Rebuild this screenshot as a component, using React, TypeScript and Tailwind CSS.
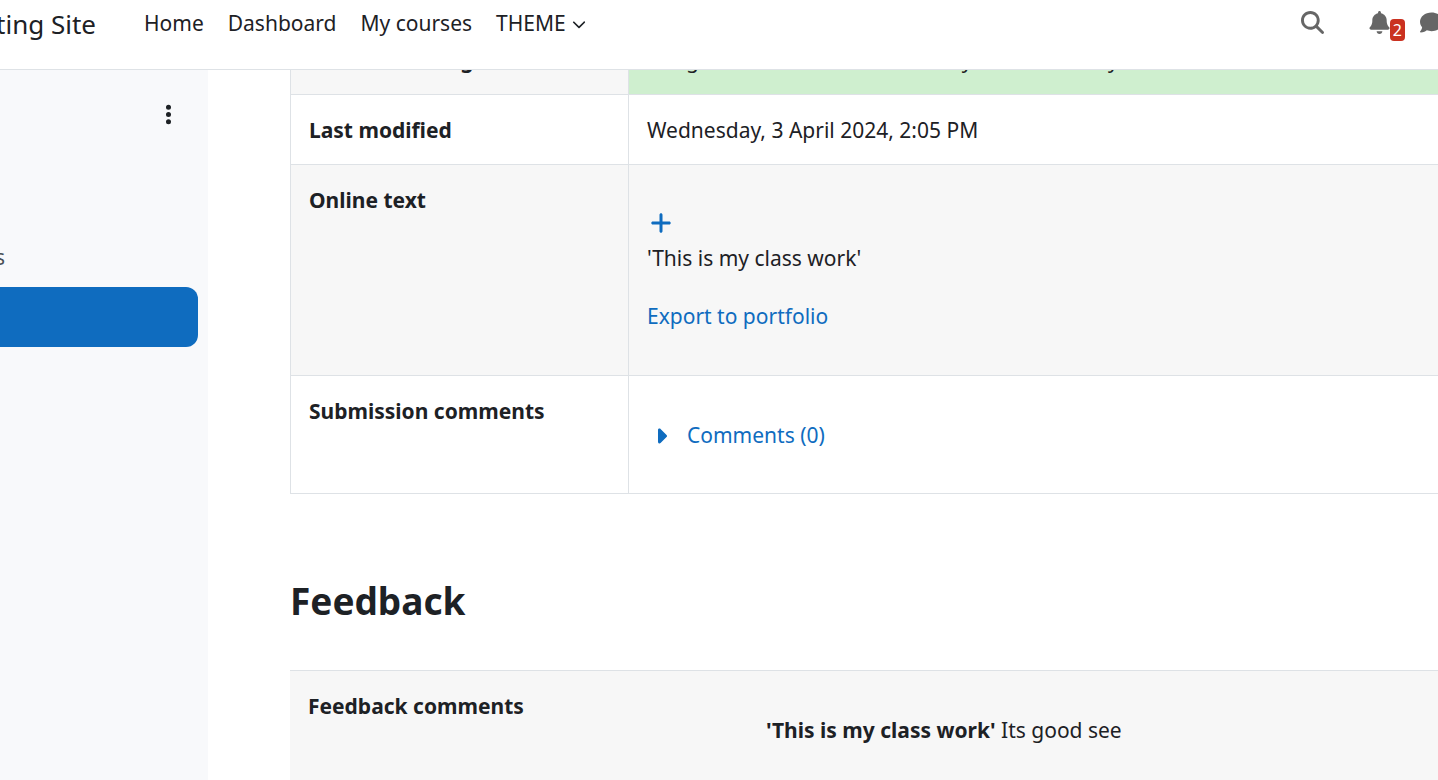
import type { ReactNode } from "react";
import {
  FaBell,
  FaCaretRight,
  FaChevronDown,
  FaComment,
  FaEllipsisVertical,
  FaMagnifyingGlass,
  FaPlus,
} from "react-icons/fa6";

function Header() {
  return (
    <header className="flex h-[70px] shrink-0 items-start overflow-hidden border-b border-[#dee2e6] bg-white">
      <a href="#" className="flex w-24 shrink-0 justify-end whitespace-nowrap pt-1 text-[26px] leading-[40px]">
        ting Site
      </a>
      <nav className="flex flex-1 gap-6 whitespace-nowrap pl-12 pt-[7px]">
        <a href="#">Home</a>
        <a href="#">Dashboard</a>
        <a href="#">My courses</a>
        <button type="button" className="flex items-center gap-1.5">
          THEME
          <FaChevronDown className="size-3.5" />
        </button>
      </nav>
      <div className="-mr-[5px] flex shrink-0 items-start pt-[11px] text-[#666]">
        <button type="button" aria-label="Search" className="mr-11">
          <FaMagnifyingGlass className="size-[23px]" />
        </button>
        <button type="button" aria-label="Notifications" className="flex items-start">
          <FaBell className="size-[23px]" />
          <span className="-ml-px mt-2 rounded bg-[#ca3120] px-[3px] text-base leading-[22px] text-white">2</span>
        </button>
        <button type="button" aria-label="Messages" className="ml-[15px]">
          <FaComment className="size-[23px]" />
        </button>
      </div>
    </header>
  );
}

function Sidebar() {
  return (
    <aside className="w-[208px] shrink-0 overflow-hidden bg-[#f8f9fb]">
      <div className="flex h-[88px] items-center justify-end pr-7">
        <button type="button" aria-label="Course index options">
          <FaEllipsisVertical className="size-[23px]" />
        </button>
      </div>
      <div className="pr-2.5 pt-[69px]">
        <a href="#" className="flex h-[60px] w-[5px] items-center justify-end text-[#495057]">
          s
        </a>
        <a href="#" aria-label="Current activity" className="block h-[60px] rounded-r-xl bg-[#0f6cbf]" />
      </div>
    </aside>
  );
}

type RowProps = { label: string; children: ReactNode; shaded?: boolean; highlight?: boolean };

function Row({ label, children, shaded = false, highlight = false }: RowProps) {
  return (
    <tr className={shaded ? "bg-[#f7f7f7]" : "bg-white"}>
      <th scope="row" className="w-[338px] border border-[#dee2e6] px-[18px] pb-[17px] pt-[19px] text-left align-top font-bold">
        {label}
      </th>
      <td
        className={
          highlight
            ? "border border-[#dee2e6] bg-[#cfefcf] px-[18px] pb-[17px] pt-[19px] align-top"
            : "border border-[#dee2e6] px-[18px] pb-[17px] pt-[19px] align-top"
        }
      >
        {children}
      </td>
    </tr>
  );
}

export default function App() {
  return (
    <div className="flex h-screen flex-col overflow-hidden bg-white font-['Noto_Sans',sans-serif] text-[21px] leading-[33px] text-[#1d2125]">
      <Header />
      <div className="flex min-h-0 flex-1">
        <Sidebar />
        <main className="-mr-1 min-w-0 flex-1 overflow-hidden pl-[82px]">
          <table className="-mt-[46px] w-full border-collapse">
            <tbody>
              <Row label="Time remaining" shaded highlight>
                Assignment was submitted 1 day 22 hours early
              </Row>
              <Row label="Last modified">Wednesday, 3 April 2024, 2:05 PM</Row>
              <Row label="Online text" shaded>
                <div className="pb-[25px] pt-5">
                  <button type="button" aria-label="View full" className="flex h-[38px] items-center pl-0.5 text-[#0f6cbf]">
                    <FaPlus className="size-6" />
                  </button>
                  <p>'This is my class work'</p>
                  <a href="#" className="mt-[25px] block text-[#0f6cbf]">
                    Export to portfolio
                  </a>
                </div>
              </Row>
              <Row label="Submission comments">
                <a href="#" className="flex items-center gap-3.5 pb-6 pl-0.5 pt-6 text-[#0f6cbf]">
                  <FaCaretRight className="size-6" />
                  Comments (0)
                </a>
              </Row>
            </tbody>
          </table>
          <h3 className="mt-20 text-[37px] font-bold leading-[54px]">Feedback</h3>
          <table className="mt-[42px] w-full">
            <tbody>
              <tr className="border-t border-[#dee2e6] bg-[#f7f7f7]">
                <th scope="row" className="w-[458px] px-[18px] pb-[17px] pt-[19px] text-left align-top font-bold">
                  Feedback comments
                </th>
                <td className="px-[18px] pb-16 pt-[43px]">
                  <strong>'This is my class work'</strong> Its good see
                </td>
              </tr>
            </tbody>
          </table>
        </main>
      </div>
    </div>
  );
}
